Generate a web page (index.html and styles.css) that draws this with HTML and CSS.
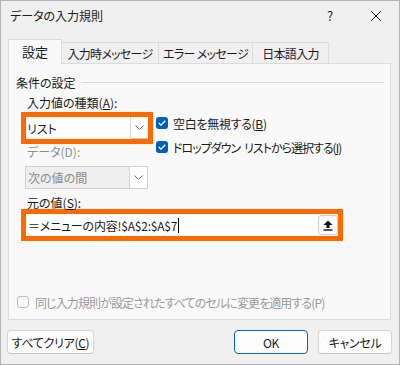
FILE: index.html
```html
<!DOCTYPE html>
<html lang="ja">
<head>
    <meta charset="UTF-8">
    <title>データの入力規則</title>
    <link rel="stylesheet" href="styles.css">
</head>
<body>
    <div class="dialog">
        <div class="titlebar">
            <span class="title">データの入力規則</span>
            <span class="tb-btn help">?</span>
            <span class="tb-btn close">
                <svg width="12" height="12" viewBox="0 0 12 12"><path d="M1 1L11 11M11 1L1 11" stroke="#1a1a1a" stroke-width="1" fill="none"/></svg>
            </span>
        </div>

        <div class="tabs">
            <div class="tab active">設定</div>
            <div class="tab w97">入力時メッセージ</div>
            <div class="tab w94">エラー メッセージ</div>
            <div class="tab w76">日本語入力</div>
        </div>

        <div class="panel">
            <div class="group-title">
                <span>条件の設定</span>
                <div class="rule"></div>
            </div>

            <div class="section">
                <div class="label">入力値の種類(<u>A</u>):</div>
                <div class="row">
                    <div class="left-col">
                        <div class="hl">
                            <div class="select">
                                <span class="value">リスト</span>
                                <span class="arrow">
                                    <svg width="9" height="5" viewBox="0 0 9 5"><path d="M0.5 0.5L4.5 4.5L8.5 0.5" stroke="#6b6b6b" fill="none"/></svg>
                                </span>
                            </div>
                        </div>
                        <div class="label muted">データ(D):</div>
                        <div class="select disabled">
                            <span class="value">次の値の間</span>
                            <span class="arrow">
                                <svg width="9" height="5" viewBox="0 0 9 5"><path d="M0.5 0.5L4.5 4.5L8.5 0.5" stroke="#6b6b6b" fill="none"/></svg>
                            </span>
                        </div>
                    </div>
                    <div class="right-col">
                        <div class="check-row tight">
                            <span class="box checked">
                                <svg width="8" height="6" viewBox="0 0 8 6"><path d="M0.8 3L3 5.2L7.2 0.8" stroke="#fff" stroke-width="1.3" fill="none"/></svg>
                            </span>
                            <span>空白を無視する(<u>B</u>)</span>
                        </div>
                        <div class="check-row tighter">
                            <span class="box checked">
                                <svg width="8" height="6" viewBox="0 0 8 6"><path d="M0.8 3L3 5.2L7.2 0.8" stroke="#fff" stroke-width="1.3" fill="none"/></svg>
                            </span>
                            <span>ドロップダウン<span class="gap"></span>リストから選択する(<u>I</u>)</span>
                        </div>
                    </div>
                </div>

                <div class="label source-label">元の値(<u>S</u>):</div>
                <div class="hl wide">
                    <div class="source">
                        <span class="value">＝メニューの内容!$A$2:$A$7</span><span class="caret"></span>
                        <span class="pick">
                            <svg width="10" height="11" viewBox="0 0 10 11"><path d="M5 0.5L9.5 5H6.5V8H3.5V5H0.5Z" fill="#111"/><rect x="0.5" y="9.3" width="9" height="1.4" fill="#111"/></svg>
                        </span>
                    </div>
                </div>
            </div>

            <div class="apply-row">
                <span class="box"></span>
                <span>同じ入力規則が設定されたすべてのセルに変更を適用する(P)</span>
            </div>
        </div>

        <div class="buttons">
            <button class="btn clear">すべてクリア(<u>C</u>)</button>
            <span class="spacer"></span>
            <button class="btn ok">OK</button>
            <button class="btn cancel">キャンセル</button>
        </div>
    </div>
</body>
</html>
```

FILE: styles.css
```css
body {
    margin: 0;
    padding: 0;
    font-family: "Noto Sans CJK JP", "Noto Sans", sans-serif;
    font-feature-settings: "palt";
    font-size: 12px;
    color: #1a1a1a;
    background-color: #f0f0f0;
}

.dialog {
    width: 400px;
    height: 365px;
    box-sizing: border-box;
    border: 1px solid #b4b4b4;
    background-color: #f0f0f0;
}

.titlebar {
    display: flex;
    align-items: center;
    height: 29px;
    padding-left: 9px;
}

.title {
    flex: 1;
    font-size: 12px;
}

.tb-btn {
    width: 46px;
    height: 29px;
    display: flex;
    align-items: center;
    justify-content: center;
}

.help {
    font-size: 13px;
}

.tabs {
    display: flex;
    align-items: flex-end;
    height: 24px;
    margin-top: 9px;
    padding-left: 7px;
}

.tab {
    box-sizing: border-box;
    height: 21px;
    display: flex;
    align-items: center;
    justify-content: center;
    border-top: 1px solid #dcdcdc;
    border-right: 1px solid #dcdcdc;
    font-size: 12px;
    letter-spacing: -0.7px;
    background-color: #f0f0f0;
}

.tab.active {
    width: 54px;
    height: 25px;
    margin-bottom: -1px;
    border-left: 1px solid #dcdcdc;
    background-color: #f9f9f9;
    font-size: 13px;
    letter-spacing: 0;
    padding-bottom: 1px;
    position: relative;
}

.w97 { width: 97px; }
.w94 { width: 94px; }
.w76 { width: 76px; }

.panel {
    box-sizing: border-box;
    width: 383px;
    height: 257px;
    margin-left: 7px;
    border: 1px solid #dcdcdc;
    background-color: #f9f9f9;
}

.group-title {
    display: flex;
    align-items: center;
    height: 16px;
    margin-top: 10px;
    padding-left: 7px;
    padding-right: 6px;
}

.rule {
    flex: 1;
    height: 1px;
    margin-left: 5px;
    background-color: #d6d6d6;
}

.section {
    padding-left: 12px;
}

.label {
    height: 16px;
    line-height: 16px;
    margin-top: 5px;
    margin-left: 6px;
}

.muted {
    color: #8d8d8d;
    height: 14px;
    line-height: 14px;
    margin-top: 1px;
}

.row {
    display: flex;
    margin-top: 1px;
}

.left-col {
    width: 132px;
}

.hl {
    box-sizing: border-box;
    width: 132px;
    height: 32px;
    border: 5px solid #ff6a00;
    background-color: #fff;
}

.hl.wide {
    width: 322px;
}

.select {
    display: flex;
    align-items: center;
    height: 100%;
    background-color: #fff;
}

.select .value {
    flex: 1;
    padding-left: 1px;
}

.arrow {
    box-sizing: border-box;
    width: 18px;
    height: 100%;
    display: flex;
    align-items: center;
    justify-content: center;
    border-left: 1px solid #d4d4d4;
    border-bottom: 1px solid #c8c8c8;
    background-color: #fff;
}

.select.disabled {
    box-sizing: border-box;
    width: 123px;
    height: 23px;
    margin-top: 7px;
    margin-left: 4px;
    border: 1px solid #cfcfcf;
    background-color: #efefef;
    color: #8a8a8a;
}

.select.disabled .value {
    padding-left: 2px;
}

.select.disabled .arrow {
    border-bottom: none;
}

.right-col {
    margin-left: 3px;
    padding-top: 5px;
}

.check-row {
    display: flex;
    align-items: center;
    height: 12px;
    margin-bottom: 12px;
    white-space: nowrap;
}

.tight {
    letter-spacing: -0.3px;
}

.tighter {
    letter-spacing: -1px;
}

.gap {
    display: inline-block;
    width: 4px;
}

.box {
    box-sizing: border-box;
    width: 12px;
    height: 12px;
    margin-right: 5px;
    border-radius: 3px;
    display: flex;
    align-items: center;
    justify-content: center;
    flex-shrink: 0;
}

.box.checked {
    background-color: #005fb8;
}

.source-label {
    height: 13px;
    line-height: 13px;
    margin-top: 7px;
}

.source {
    display: flex;
    align-items: center;
    height: 100%;
    padding-left: 2px;
    letter-spacing: -0.2px;
}

.caret {
    width: 1px;
    height: 15px;
    background-color: #000;
    margin-left: 1px;
}

.pick {
    box-sizing: border-box;
    width: 20px;
    height: 20px;
    margin-left: auto;
    border: 1px solid #cfcfcf;
    border-radius: 3px;
    display: flex;
    align-items: center;
    justify-content: center;
    background-color: #fdfdfd;
}

.apply-row {
    display: flex;
    align-items: center;
    height: 12px;
    margin-top: 55px;
    padding-left: 8px;
    color: #9a9a9a;
    letter-spacing: -0.9px;
    white-space: nowrap;
}

.apply-row .box {
    border: 1px solid #bdbdbd;
    margin-right: 6px;
}

.buttons {
    display: flex;
    margin-top: 10px;
    padding-left: 6px;
    padding-right: 7px;
}

.spacer {
    flex: 1;
}

.btn {
    box-sizing: border-box;
    height: 24px;
    padding: 0;
    font-family: inherit;
    font-feature-settings: "palt";
    font-size: 12px;
    letter-spacing: -0.3px;
    color: #1a1a1a;
    background-color: #fdfdfd;
    border: 1px solid #d5d5d5;
    border-bottom-color: #c4c4c4;
    border-radius: 4px;
}

.clear {
    width: 87px;
}

.ok {
    width: 74px;
    border: 1px solid #0067c0;
}

.cancel {
    width: 74px;
    margin-left: 10px;
}
```
